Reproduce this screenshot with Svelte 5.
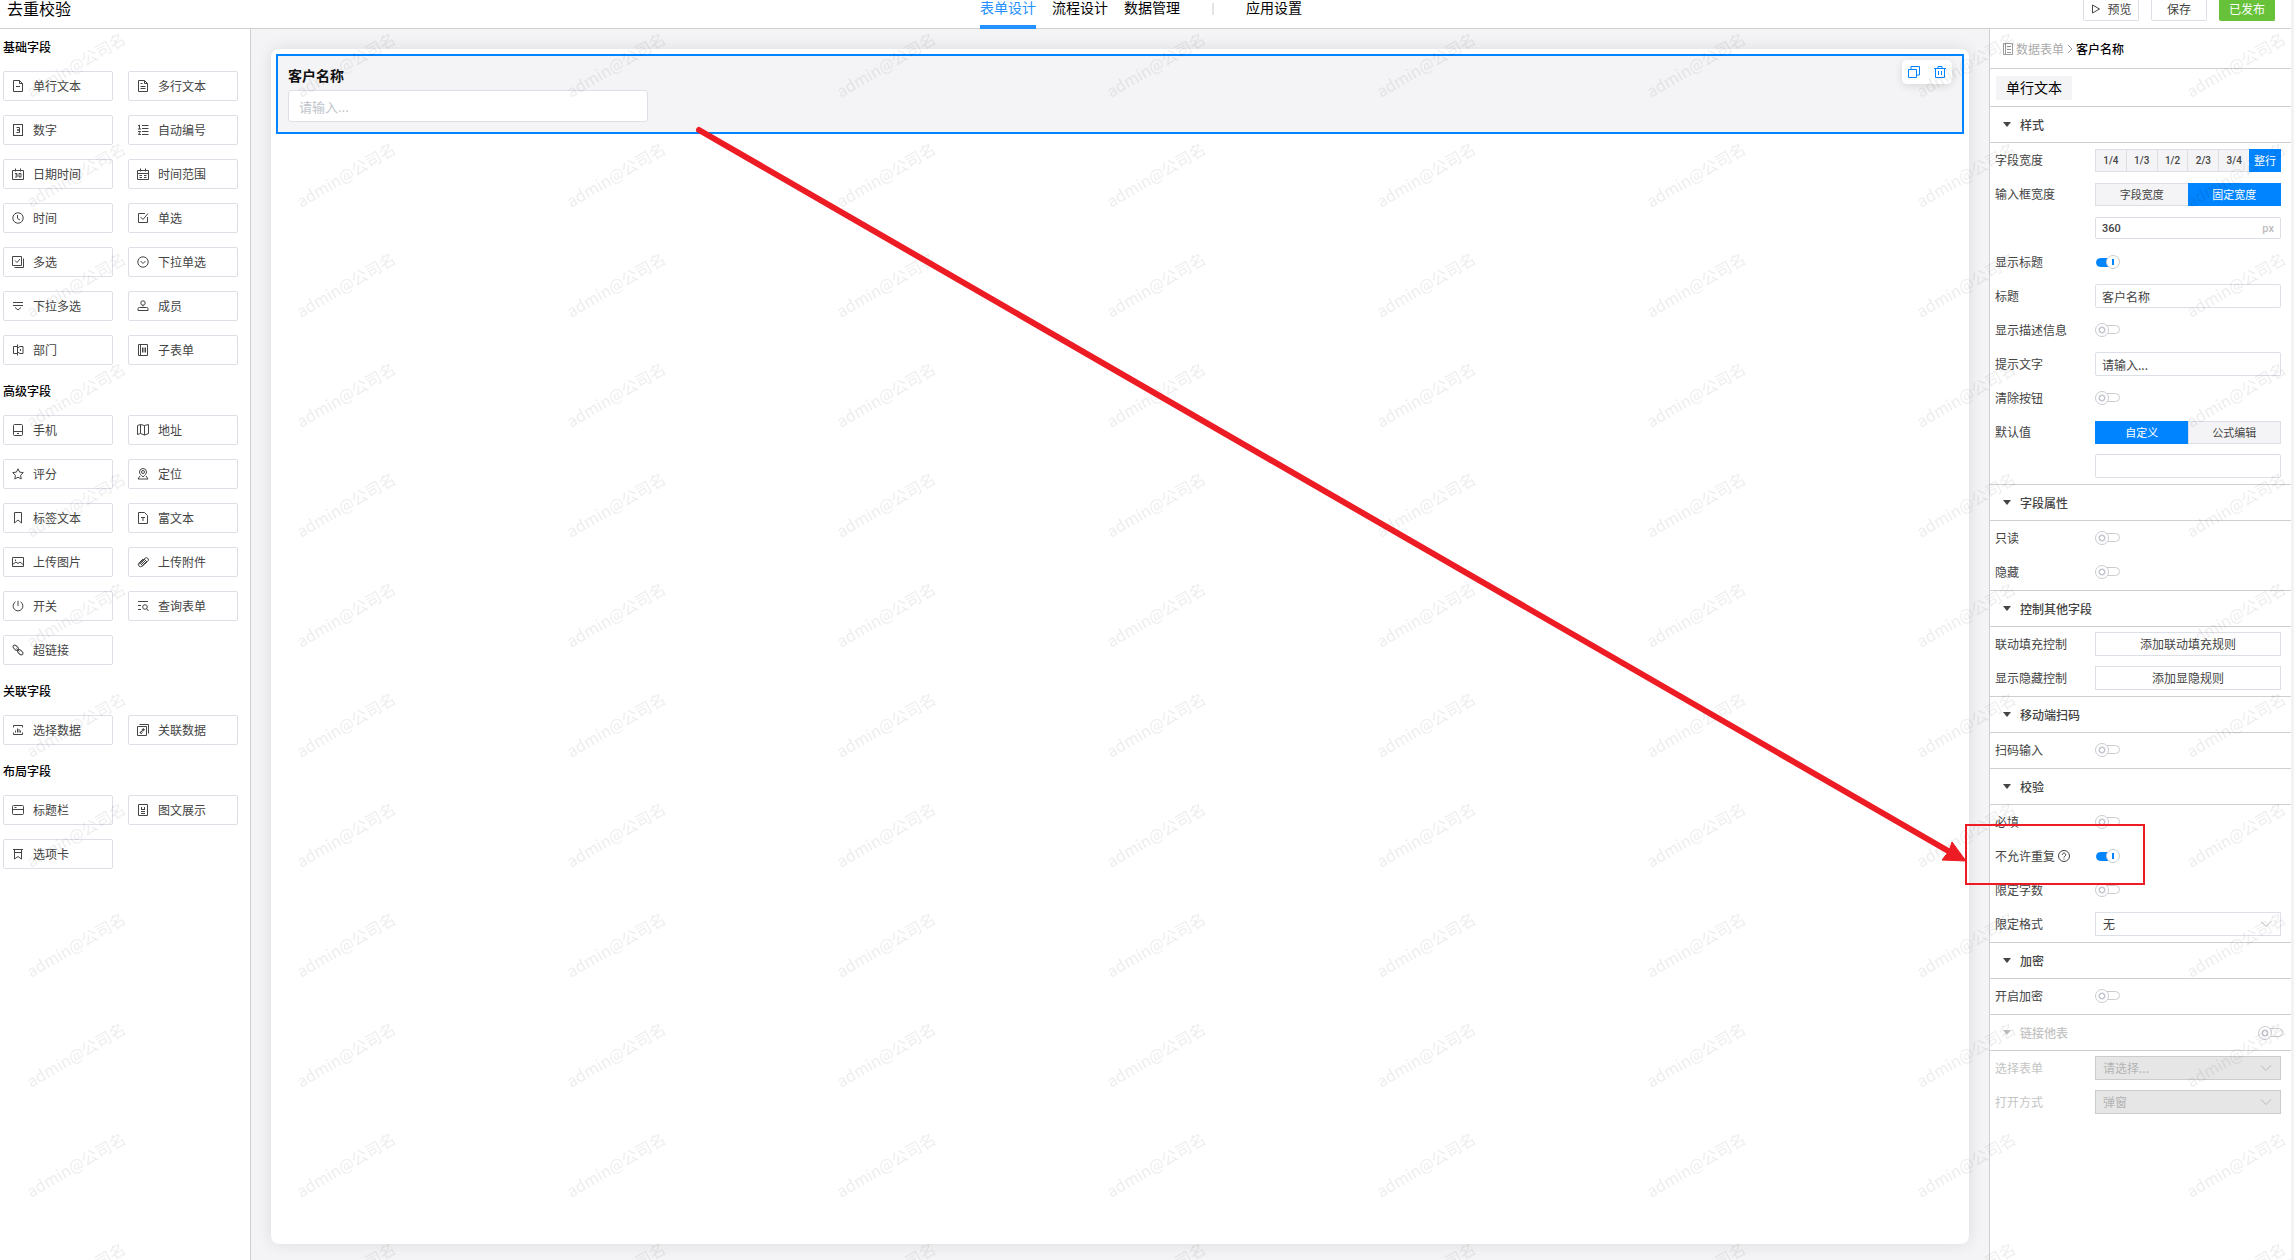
<script lang="ts">
    type Control = 'segment' | 'unit' | 'switch' | 'input' | 'button' | 'select';

    interface Row {
        id: string;
        label?: string;
        control: Control;
        value?: string;
        options?: string[];
        active?: number;
        on?: boolean;
        help?: boolean;
    }

    interface Section {
        title: string;
        rows: Row[];
        disabled?: boolean;
    }

    const tabs = ['表单设计', '流程设计', '数据管理', '应用设置'];

    const icons: Record<string, string> = {
        text: '<path d="M1.500 .5h6l3 3v8h-9zM7.500 .5v3h3M4 6.500h4"/>',
        textarea: '<path d="M1.500 .5h6l3 3v8h-9zM7.500 .5v3h3M3.500 3.500h2M3.500 6.500h5M3.500 8.500h5"/>',
        number: '<rect x="1.500" y=".5" width="9" height="11"/><path d="M4.500 3.500h3v2.500h-2.500h2.500v2.500h-3"/>',
        serial: '<path d="M5 1.500h6.500M5 4.500h6.500M5 7.500h6.500M5 10.500h6.500M1 2l1.500-1v4M1 5h3M1 7.500h2.500L1.500 10.500h2.500"/>',
        datetime: '<path d="M.5 2.500h11v9H.5zM3.500 .5v3M8.500 .5v3M3 5.500h2v3.500H3M3.500 7h1.500M7 5.500h2V9H7z"/>',
        range: '<path d="M.5 2.500h11v9H.5zM.5 5.500h11M3.500 .5v3M8.500 .5v3M2.500 7.500h2.500M7 7.500h2.500M2.500 9.500h2.500M7 9.500h2.500"/>',
        time: '<circle cx="6" cy="6" r="5.200"/><path d="M5.500 3v3.500l2.500 1.500"/>',
        radio: '<path d="M8 1.500H1.500v9h9V5M3.500 5l2.500 2.500 5-6"/>',
        multi: '<path d="M.5 .5h9v9h-9zM3 4.500l2 2 3-3.500M11.500 2.500v9H2.500"/>',
        select: '<circle cx="6" cy="6" r="5.200"/><path d="M3.500 5l2.500 2.500L8.500 5"/>',
        selects: '<path d="M1 2.500h10M1 5.500h10M3 7.500l3 2.500 3-2.500"/>',
        member: '<circle cx="6" cy="3" r="2.200"/><path d="M6 5v1.500M1 10.500V8.500Q1 7.500 2.500 7.500h7Q11 7.500 11 8.500v2z"/>',
        dept: '<path d="M5 2.500H1.500v7H5M5.500 .5v11M5.500 4L8 2.500h3v7H8L5.500 8M8.500 5v2"/>',
        sub: '<path d="M1.500 .5h9v11h-9zM3.500 .5v11M5.500 3.500v5M7 3.500v5M8.500 3.500v5"/>',
        phone: '<rect x="1.500" y=".5" width="9" height="11" rx="1"/><path d="M1.500 7.500h9M5 9.500h2"/>',
        map: '<path d="M.5 1.500l3-1 4 1 4-1v9l-4 1.500-4-1.500-3 1zM3.500 .5v9M7.500 1.500v9.500"/>',
        star: '<path d="M6 .8l1.600 3.300 3.700.5-2.700 2.600.6 3.800L6 9.200 2.800 11l.6-3.800L.7 4.600l3.700-.5z"/>',
        locate: '<path d="M6 8.800C3.500 7 2.500 5.500 2.500 4a3.500 3.500 0 017 0C9.500 5.500 8.500 7 6 8.800z"/><circle cx="6" cy="4" r="1.500"/><path d="M3 8L1 11h10L9 8"/>',
        tag: '<path d="M2.500 .5h7v10.500L6 8 2.500 11z"/>',
        rich: '<path d="M1.500 .5h6l3 3v8h-9zM4 5.500h4M6 5.500v3.500"/>',
        image: '<path d="M.5 1.500h11v9H.5zM.5 8.500l3.500-2.500 2 1.500 2-1.500 3.500 3M3.500 3.500v1.500"/>',
        clip: '<path d="M2 8.500l5.500-6Q9.500 .8 11 2.500T10.500 5.500L5.500 10Q3.500 11.500 2 10T2 7L6 3M4 9l5-5M3.200 8l4.800-5M5 10l5-5"/>',
        power: '<path d="M6 .8v5.200M3.500 1.800a4.900 4.900 0 105 0"/>',
        query: '<path d="M1 1.500h10M1 5.500h3M1 9.500h3"/><circle cx="8" cy="7" r="2.300"/><path d="M9.500 8.500l2 2.500"/>',
        link: '<rect x="-1.700" y="-3" width="3.400" height="6" rx="1.700" transform="translate(3.700 3.700) rotate(-45)"/><rect x="-1.700" y="-3" width="3.400" height="6" rx="1.700" transform="translate(8.300 8.300) rotate(-45)"/><path d="M4.500 4.500l3 3"/>',
        pick: '<path d="M1.500 3.500v-2h9v2M1.500 8.500v2h9v-2M3.500 8.500v-2M5.500 8.500v-4M7 8.500V5M8.500 8.500v-2"/>',
        relate: '<path d="M2.500 .5h9v9M.5 2.500h9v9h-9zM3 9l4-4M4.500 6l2-1.500 1 1-1.500 2M5.500 8.500l-1.500 1.200-1-1L4.500 7"/>',
        titlebar: '<rect x=".5" y="1.500" width="11" height="9" rx="1"/><path d="M.5 5.500h11M2.500 3.500h2"/>',
        graphic: '<path d="M1.500 .5h9v11h-9zM4.500 3v3M7.500 3v3M4.500 5.500h3M4 7.500h4M4 9.500h4"/>',
        card: '<path d="M2.500 1.500h7V11L6 8.500 2.500 11zM2.500 4.500h7M1 1.500h10"/>',
    };

    const groups = [
        {
            title: '基础字段',
            fields: [
                ['text', '单行文本'], ['textarea', '多行文本'],
                ['number', '数字'], ['serial', '自动编号'],
                ['datetime', '日期时间'], ['range', '时间范围'],
                ['time', '时间'], ['radio', '单选'],
                ['multi', '多选'], ['select', '下拉单选'],
                ['selects', '下拉多选'], ['member', '成员'],
                ['dept', '部门'], ['sub', '子表单'],
            ],
        },
        {
            title: '高级字段',
            fields: [
                ['phone', '手机'], ['map', '地址'],
                ['star', '评分'], ['locate', '定位'],
                ['tag', '标签文本'], ['rich', '富文本'],
                ['image', '上传图片'], ['clip', '上传附件'],
                ['power', '开关'], ['query', '查询表单'],
                ['link', '超链接'],
            ],
        },
        {
            title: '关联字段',
            fields: [['pick', '选择数据'], ['relate', '关联数据']],
        },
        {
            title: '布局字段',
            fields: [['titlebar', '标题栏'], ['graphic', '图文展示'], ['card', '选项卡']],
        },
    ];

    const sections: Section[] = [
        {
            title: '样式',
            rows: [
                { id: 'field-width', label: '字段宽度', control: 'segment', options: ['1/4', '1/3', '1/2', '2/3', '3/4', '整行'], active: 5 },
                { id: 'input-width', label: '输入框宽度', control: 'segment', options: ['字段宽度', '固定宽度'], active: 1 },
                { id: 'fixed-width', control: 'unit', value: '360' },
                { id: 'show-title', label: '显示标题', control: 'switch', on: true },
                { id: 'title', label: '标题', control: 'input', value: '客户名称' },
                { id: 'show-desc', label: '显示描述信息', control: 'switch' },
                { id: 'hint', label: '提示文字', control: 'input', value: '请输入...' },
                { id: 'clearable', label: '清除按钮', control: 'switch' },
                { id: 'default-mode', label: '默认值', control: 'segment', options: ['自定义', '公式编辑'], active: 0 },
                { id: 'default-value', control: 'input', value: '' },
            ],
        },
        {
            title: '字段属性',
            rows: [
                { id: 'readonly', label: '只读', control: 'switch' },
                { id: 'hidden', label: '隐藏', control: 'switch' },
            ],
        },
        {
            title: '控制其他字段',
            rows: [
                { id: 'fill-rule', label: '联动填充控制', control: 'button', value: '添加联动填充规则' },
                { id: 'show-rule', label: '显示隐藏控制', control: 'button', value: '添加显隐规则' },
            ],
        },
        {
            title: '移动端扫码',
            rows: [{ id: 'scan', label: '扫码输入', control: 'switch' }],
        },
        {
            title: '校验',
            rows: [
                { id: 'required', label: '必填', control: 'switch' },
                { id: 'unique', label: '不允许重复', control: 'switch', on: true, help: true },
                { id: 'limit', label: '限定字数', control: 'switch' },
                { id: 'format', label: '限定格式', control: 'select', value: '无' },
            ],
        },
        {
            title: '加密',
            rows: [{ id: 'encrypt', label: '开启加密', control: 'switch' }],
        },
        {
            title: '链接他表',
            disabled: true,
            rows: [
                { id: 'link-form', label: '选择表单', control: 'select', value: '请选择...' },
                { id: 'open-mode', label: '打开方式', control: 'select', value: '弹窗' },
            ],
        },
    ];

    let activeTab = $state(0);
</script>

{#snippet control(row: Row, disabled: boolean)}
    {#if row.control === 'segment'}
        <div class="segment" role="group" aria-label={row.label}>
            {#each row.options ?? [] as option, i}
                <button type="button" class:active={i === row.active} class:short={option.includes('/')}>{option}</button>
            {/each}
        </div>
    {:else if row.control === 'unit'}
        <div class="unit">
            <input id={row.id} type="text" value={row.value} aria-label="固定宽度" />
            <span>px</span>
        </div>
    {:else if row.control === 'switch'}
        <input id={row.id} class="switch" type="checkbox" checked={row.on ?? false} />
    {:else if row.control === 'input'}
        <input id={row.id} class="box" type="text" value={row.value} aria-label={row.label ?? '默认值'} />
    {:else if row.control === 'button'}
        <button id={row.id} class="rule" type="button">{row.value}</button>
    {:else}
        <div class="select">
            <select id={row.id} {disabled}>
                <option>{row.value}</option>
            </select>
            <svg viewBox="0 0 12 12" aria-hidden="true"><path d="M1 3.500l5 5 5-5" /></svg>
        </div>
    {/if}
{/snippet}

<div class="app">
    <header>
        <h1>去重校验</h1>
        <nav>
            {#each tabs as tab, i}
                {#if i === 3}<span class="divider"></span>{/if}
                <button type="button" class:active={i === activeTab} onclick={() => (activeTab = i)}>{tab}</button>
            {/each}
        </nav>
        <div class="actions">
            <button type="button">
                <svg viewBox="0 0 12 12" aria-hidden="true"><path d="M2.500 2l7 4-7 4z" /></svg>
                预览
            </button>
            <button type="button">保存</button>
            <button type="button" class="published">已发布</button>
        </div>
    </header>

    <div class="body">
        <aside class="fields">
            {#each groups as group}
                <section>
                    <h2>{group.title}</h2>
                    <div class="grid">
                        {#each group.fields as [icon, name]}
                            <button type="button">
                                <svg viewBox="0 0 12 12" aria-hidden="true">{@html icons[icon]}</svg>
                                {name}
                            </button>
                        {/each}
                    </div>
                </section>
            {/each}
        </aside>

        <main>
            <div class="canvas">
                <div class="widget">
                    <label for="customer">客户名称</label>
                    <input id="customer" type="text" placeholder="请输入..." />
                    <div class="tools">
                        <button type="button" aria-label="复制">
                            <svg viewBox="0 0 12 12"><path d="M.5 3.500h8v8h-8zM3 3.500v-3h8.500v8.500h-3" /></svg>
                        </button>
                        <button type="button" aria-label="删除">
                            <svg viewBox="0 0 12 12"><path d="M0 2.500h12M4 2.500v-2h4v2M1.500 2.500v9h9v-9M4.500 5v4M7.500 5v4" /></svg>
                        </button>
                    </div>
                </div>
            </div>
        </main>

        <aside class="props">
            <div class="crumbs">
                <svg viewBox="0 0 12 14" aria-hidden="true"><path d="M1.500 1.500h9v11h-9zM3.500 1.500v11M5 4.500h4M5 7.500h4M5 10.500h4" /></svg>
                <a href="#form">数据表单</a>
                <svg class="sep" viewBox="0 0 6 10" aria-hidden="true"><path d="M1 1l4 4-4 4" /></svg>
                <span>客户名称</span>
            </div>
            <div class="kind"><span>单行文本</span></div>
            {#each sections as section}
                <section class:disabled={section.disabled}>
                    <h3>
                        <span class="caret"></span>
                        {section.title}
                        {#if section.disabled}
                            <input class="switch" type="checkbox" aria-label={section.title} />
                        {/if}
                    </h3>
                    <div class="rows">
                        {#each section.rows as row}
                            <div class="row">
                                <div class="name">
                                    {#if row.label && row.control === 'segment'}
                                        <span>{row.label}</span>
                                    {:else if row.label}
                                        <label for={row.id}>{row.label}</label>
                                    {/if}
                                    {#if row.help}
                                        <svg viewBox="0 0 12 12" aria-hidden="true"><circle cx="6" cy="6" r="5.500" /><path d="M4.300 4.800a1.700 1.700 0 113 1.100Q6 6.500 6 7.500M6 8.500v1" /></svg>
                                    {/if}
                                </div>
                                {@render control(row, section.disabled ?? false)}
                            </div>
                        {/each}
                    </div>
                </section>
            {/each}
        </aside>
    </div>

    <svg class="watermark" aria-hidden="true">
        <defs>
            <pattern id="mark" width="270" height="110" patternUnits="userSpaceOnUse">
                <text x="31" y="98" transform="rotate(-30 31 98)">admin@公司名</text>
            </pattern>
        </defs>
        <rect width="100%" height="100%" fill="url(#mark)" />
    </svg>

    <!-- arrow from the field to the "no duplicates" switch -->
    <svg class="note" viewBox="0 0 2294 1260" preserveAspectRatio="none" aria-hidden="true">
        <path class="line" d="M699 130L1950 852" />
        <path class="head" d="M1966 861L1952 842L1949 851L1942 860z" />
        <rect x="1966" y="825" width="178" height="59" />
    </svg>
</div>

<style>
    :global(body) {
        background: #f3f3f5;
    }

    .app {
        position: relative;
        display: flex;
        flex-direction: column;
        min-height: 100vh;
        padding-right: 3px;
        box-sizing: border-box;
        color: #444;
        font: 12px/16px "Noto Sans CJK SC", sans-serif;
    }

    .app * {
        box-sizing: border-box;
    }

    h1, h2, h3 {
        margin: 0;
        font-size: 12px;
    }

    button, input, select {
        margin: 0;
        padding: 0;
        border: 0;
        background: none;
        color: inherit;
        font: inherit;
        outline: none;
    }

    svg {
        fill: none;
        stroke: currentColor;
    }

    header {
        display: grid;
        grid-template-columns: 1fr auto 1fr;
        align-items: start;
        height: 29px;
        padding: 0 16px 0 7px;
        border-bottom: 1px solid #cfcfcf;
        background: #fff;
    }

    h1 {
        color: #000;
        font-size: 16px;
        font-weight: 400;
    }

    nav {
        display: flex;
        align-items: flex-start;
        gap: 16px;
    }

    nav button {
        display: flex;
        align-items: flex-start;
        height: 29px;
        border-bottom: 4px solid transparent;
        color: #000;
        font-size: 14px;
        line-height: 14px;
    }

    nav .active {
        border-bottom-color: #2590ff;
        color: #2590ff;
    }

    .divider {
        width: 2px;
        height: 12px;
        margin: 3px 16px 0;
        background: #e4e4e4;
    }

    .actions {
        display: flex;
        justify-content: flex-end;
        gap: 12px;
    }

    .actions button {
        display: flex;
        align-items: center;
        justify-content: center;
        gap: 5px;
        width: 56px;
        height: 21px;
        padding-bottom: 2px;
        border: 1px solid #dcdfe6;
        border-top: 0;
        border-radius: 0 0 2px 2px;
    }

    .actions svg {
        width: 12px;
        height: 12px;
    }

    .actions .published {
        border-color: #67c23a;
        background: #67c23a;
        color: #fff;
    }

    .body {
        flex: 1;
        display: flex;
    }

    .fields {
        width: 251px;
        border-right: 1px solid #cfcfcf;
        padding: 0 3px;
        background: #fff;
    }

    .fields h2 {
        padding: 18px 0 16px;
        color: #000;
        font-weight: 500;
    }

    .fields section:first-child h2 {
        padding-top: 10px;
    }

    .grid {
        display: grid;
        grid-template-columns: 110px 110px;
        gap: 14px 15px;
    }

    .grid button {
        display: flex;
        align-items: center;
        gap: 9px;
        height: 30px;
        padding-left: 8px;
        border: 1px solid #dcdfe6;
        border-radius: 2px;
    }

    .grid svg {
        width: 12px;
        height: 12px;
    }

    main {
        flex: 1;
        display: flex;
        padding: 20px 20px 16px;
        background: #f4f4f6;
    }

    .canvas {
        flex: 1;
        padding: 5px;
        border-radius: 8px;
        background: #fff;
        box-shadow: 0 0 16px rgba(0, 0, 0, 0.1);
    }

    .widget {
        position: relative;
        display: flex;
        flex-direction: column;
        gap: 6px;
        padding: 10px 10px 10px;
        border: 2px solid #0084ff;
        background: #f4f4f6;
    }

    .widget label {
        color: #111;
        font-size: 14px;
        font-weight: 700;
        line-height: 18px;
    }

    .widget input {
        width: 360px;
        height: 32px;
        padding: 0 10px;
        border: 1px solid #dcdfe6;
        border-radius: 3px;
        background: #fff;
        font-size: 13px;
    }

    .widget input::placeholder {
        color: #c0c4cc;
    }

    .tools {
        position: absolute;
        top: 4px;
        right: 10px;
        display: flex;
        gap: 14px;
        padding: 6px;
        border-radius: 5px;
        background: #fff;
        box-shadow: 0 2px 8px rgba(0, 0, 0, 0.12);
        color: #0084ff;
    }

    .tools button,
    .tools svg {
        display: block;
        width: 12px;
        height: 12px;
    }

    .props {
        width: 302px;
        border-left: 1px solid #cfcfcf;
        border-radius: 0 0 4px 0;
        background: #fff;
    }

    .crumbs {
        display: flex;
        align-items: center;
        gap: 2px;
        height: 40px;
        padding-left: 12px;
        border-bottom: 1px solid #cfcfcf;
        color: #000;
        font-weight: 500;
    }

    .crumbs svg {
        width: 12px;
        height: 14px;
        color: #999;
    }

    .crumbs .sep {
        width: 6px;
        height: 10px;
        margin: 0 1px;
    }

    .crumbs a {
        color: #aaa;
        font-weight: 400;
        text-decoration: none;
    }

    .kind {
        display: flex;
        align-items: center;
        height: 37px;
        padding-left: 6px;
        color: #000;
        font-size: 14px;
    }

    .kind span {
        padding: 3px 10px 5px;
        border-radius: 2px;
        background: #f4f4f6;
    }

    h3 {
        display: flex;
        align-items: center;
        gap: 9px;
        height: 37px;
        padding: 0 8px 0 13px;
        border-top: 1px solid #cfcfcf;
        border-bottom: 1px solid #cfcfcf;
        font-weight: 500;
    }

    .caret {
        border: 4px solid transparent;
        border-top: 5px solid currentColor;
        border-bottom: 0;
    }

    h3 .switch {
        margin-left: auto;
    }

    .rows {
        padding-bottom: 1px;
    }

    .row {
        display: grid;
        grid-template-columns: 100px 1fr;
        align-items: center;
        height: 34px;
        padding: 0 10px 0 5px;
    }

    .name {
        display: flex;
        align-items: center;
        gap: 3px;
    }

    .name svg {
        width: 12px;
        height: 12px;
    }

    .segment {
        display: flex;
        height: 23px;
    }

    .segment button {
        flex: 1;
        border: 1px solid #dcdfe6;
        border-right: 0;
        background: #f4f4f6;
        font-size: 11px;
    }

    .segment button:last-child {
        border-right: 1px solid #dcdfe6;
    }

    .segment .short {
        font: 500 10px Roboto, sans-serif;
    }

    .segment .active,
    .segment .active:last-child {
        border-color: #0084ff;
        background: #0084ff;
        color: #fff;
    }

    .unit {
        display: flex;
        align-items: center;
        height: 22px;
        padding: 0 6px;
        border: 1px solid #dcdfe6;
        border-radius: 2px;
        font: 500 11px Roboto, sans-serif;
    }

    .unit input {
        flex: 1;
        min-width: 0;
    }

    .unit span {
        color: #bbb;
    }

    .box {
        width: 100%;
        height: 24px;
        padding: 0 6px;
        border: 1px solid #dcdfe6;
        border-radius: 2px;
    }

    .switch {
        position: relative;
        width: 25px;
        height: 14px;
        appearance: none;
    }

    .switch::before,
    .switch::after {
        position: absolute;
        box-sizing: border-box;
        content: '';
    }

    .switch::before {
        top: 2px;
        right: 0;
        width: 20px;
        height: 9px;
        border: 1px solid #ccc;
        border-radius: 5px;
    }

    .switch::after {
        top: 0;
        left: 0;
        width: 14px;
        height: 14px;
        border: 1px solid #ccc;
        border-radius: 50%;
        background: radial-gradient(circle, #fff 2px, #c4c8d2 2px, #c4c8d2 3px, #fff 4px);
    }

    .switch:checked::before {
        top: 3px;
        right: 4px;
        border-color: #0084ff;
        background: #0084ff;
    }

    .switch:checked::after {
        left: 11px;
        background: linear-gradient(#0084ff, #0084ff) center / 2px 6px no-repeat #fff;
    }

    .rule {
        height: 24px;
        border: 1px solid #dcdfe6;
    }

    .select {
        position: relative;
    }

    .select select {
        display: block;
        width: 100%;
        height: 24px;
        padding: 0 7px;
        border: 1px solid #dcdfe6;
        appearance: none;
    }

    .select svg {
        position: absolute;
        top: 6px;
        right: 9px;
        width: 12px;
        height: 12px;
        color: #bbb;
        pointer-events: none;
    }

    .disabled {
        color: #c4c4c4;
    }

    .disabled select {
        border-color: #ccc;
        background: #e6e6e6;
        color: #b4b4b4;
        opacity: 1;
    }

    .watermark,
    .note {
        position: absolute;
        top: 0;
        left: 0;
        width: 100%;
        height: 100%;
        pointer-events: none;
    }

    .watermark {
        stroke: none;
    }

    .watermark text {
        fill: #000;
        fill-opacity: 0.07;
        font-size: 16px;
    }

    .note {
        stroke: #ed1c24;
    }

    .note .line {
        stroke-width: 6;
        stroke-linecap: round;
    }

    .note .head {
        fill: #ed1c24;
    }

    .note rect {
        stroke-width: 2;
    }
</style>
